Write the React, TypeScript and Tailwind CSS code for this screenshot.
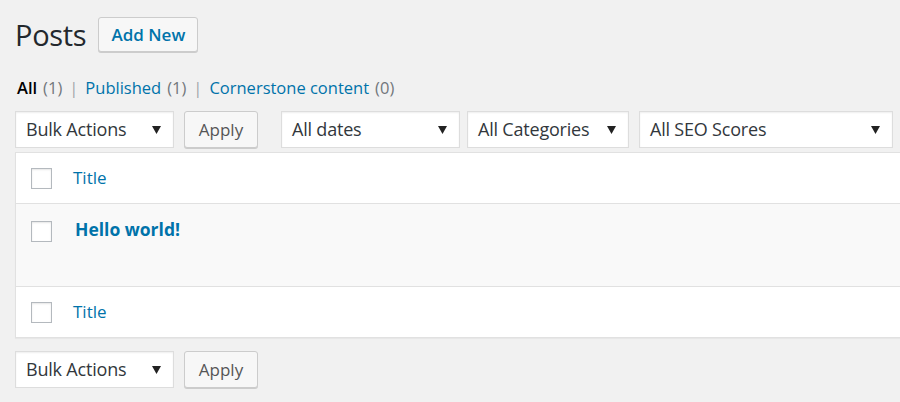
import React from "react";

const Arrow = () => (
  <svg width="9" height="8" viewBox="0 0 9 8" className="shrink-0">
    <path d="M0 0 H9 L4.5 8 Z" fill="#222" />
  </svg>
);

function Select({ label, w }: { label: string; w: string }) {
  return (
    <div
      className={`${w} h-[37px] flex items-center justify-between pl-[10px] pr-[12px] bg-white border border-[#dddddd] shadow-[inset_0_1px_2px_rgba(0,0,0,0.07)] text-[18px] text-[#32373c]`}
    >
      <span className="tracking-[-0.2px]">{label}</span>
      <Arrow />
    </div>
  );
}

function ApplyBtn() {
  return (
    <div className="w-[74px] h-[37px] flex items-center justify-center bg-[#f7f7f7] border border-[#cccccc] rounded-[3px] shadow-[0_1px_0_#cccccc] text-[17px] text-[#555555]">
      Apply
    </div>
  );
}

function Checkbox() {
  return <div className="w-[21px] h-[21px] bg-white border border-[#b4b9be] shadow-[inset_0_1px_2px_rgba(0,0,0,0.1)] shrink-0" />;
}

export default function App() {
  return (
    <div className="w-[900px] h-[402px] overflow-hidden bg-[#f1f1f1] font-['Open_Sans',sans-serif]">
      <div className="flex items-center pl-[15px] pt-[17px] gap-[12px]">
        <h1 className="text-[29px] leading-[35px] text-[#23282d] tracking-[-0.3px]">Posts</h1>
        <div className="h-[35px] w-[100px] flex items-center justify-center bg-[#f7f7f7] border border-[#cccccc] rounded-[3px] shadow-[0_1px_0_#cccccc] text-[17px] font-semibold text-[#0073aa]">
          Add New
        </div>
      </div>

      <div className="flex items-center pl-[17px] mt-[26px] h-[20px] text-[16.5px] text-[#555d66]">
        <span className="font-semibold text-black">All</span>
        <span className="ml-[6px] text-[#72777c]">(1)</span>
        <span className="mx-[7px] text-[#9ea3a8]">|</span>
        <span className="text-[#0073aa]">Published</span>
        <span className="ml-[6px] text-[#72777c]">(1)</span>
        <span className="mx-[7px] text-[#9ea3a8]">|</span>
        <span className="text-[#0073aa]">Cornerstone content</span>
        <span className="ml-[6px] text-[#72777c]">(0)</span>
      </div>

      <div className="flex items-center pl-[15px] mt-[13px]">
        <Select label="Bulk Actions" w="w-[159px]" />
        <div className="ml-[10px]">
          <ApplyBtn />
        </div>
        <div className="ml-[23px]">
          <Select label="All dates" w="w-[179px]" />
        </div>
        <div className="ml-[7px]">
          <Select label="All Categories" w="w-[162px]" />
        </div>
        <div className="ml-[10px]">
          <Select label="All SEO Scores" w="w-[254px]" />
        </div>
      </div>

      <div className="ml-[15px] mt-[4px] w-[900px] bg-white border border-[#e1e1e1] shadow-[0_1px_1px_rgba(0,0,0,0.04)]">
        <div className="h-[51px] flex items-center pl-[15px] border-b border-[#e1e1e1]">
          <Checkbox />
          <span className="ml-[21px] text-[17px] text-[#0073aa]">Title</span>
        </div>
        <div className="h-[83px] bg-[#f9f9f9] border-b border-[#e1e1e1] pl-[15px] pt-[16px]">
          <div className="flex items-center">
            <Checkbox />
            <span className="ml-[23px] text-[17.5px] font-bold text-[#0073aa] -mt-[4px]">Hello world!</span>
          </div>
        </div>
        <div className="h-[50px] flex items-center pl-[15px]">
          <Checkbox />
          <span className="ml-[21px] text-[17px] text-[#0073aa]">Title</span>
        </div>
      </div>

      <div className="flex items-center pl-[15px] mt-[13px]">
        <Select label="Bulk Actions" w="w-[159px]" />
        <div className="ml-[10px]">
          <ApplyBtn />
        </div>
      </div>
    </div>
  );
}
